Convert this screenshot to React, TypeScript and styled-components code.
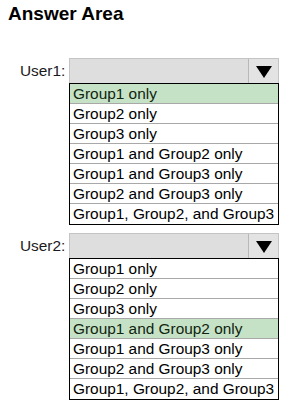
import React from 'react';
import styled, { createGlobalStyle } from 'styled-components';

const GlobalStyle = createGlobalStyle`
  body {
    margin: 0;
    background: #ffffff;
    font-family: 'Liberation Sans', Arial, sans-serif;
    color: #000000;
  }
`;

const OPTIONS = [
  'Group1 only',
  'Group2 only',
  'Group3 only',
  'Group1 and Group2 only',
  'Group1 and Group3 only',
  'Group2 and Group3 only',
  'Group1, Group2, and Group3',
];

interface UserChoice {
  label: string;
  selected: number;
}

const CHOICES: UserChoice[] = [
  { label: 'User1:', selected: 0 },
  { label: 'User2:', selected: 3 },
];

export default function App() {
  return (
    <Root>
      <GlobalStyle />
      <Title>Answer Area</Title>
      <Choices>
        {CHOICES.map((choice) => (
          <ChoiceRow key={choice.label}>
            <Label>{choice.label}</Label>
            <Dropdown>
              <SelectBox>
                <SelectValue />
                <ArrowButton>
                  <svg width="16" height="12" viewBox="0 0 16 12">
                    <polygon points="0,0 16,0 8,12" fill="#000" />
                  </svg>
                </ArrowButton>
              </SelectBox>
              <OptionList>
                {OPTIONS.map((option, i) => (
                  <OptionItem key={option} selected={i === choice.selected}>
                    {option}
                  </OptionItem>
                ))}
              </OptionList>
            </Dropdown>
          </ChoiceRow>
        ))}
      </Choices>
    </Root>
  );
}

const Root = styled.main`
  width: 287px;
  height: 408px;
  padding-top: 3px;
  box-sizing: border-box;
`;

const Title = styled.h1`
  margin: 0 0 0 8px;
  font-size: 19px;
  line-height: 22px;
  font-weight: 700;
`;

const Choices = styled.section`
  display: flex;
  flex-direction: column;
  gap: 8px;
  margin-top: 33px;
`;

const ChoiceRow = styled.div`
  display: flex;
  align-items: flex-start;
  padding-left: 20px;
`;

const Label = styled.span`
  width: 49px;
  height: 25px;
  display: flex;
  align-items: center;
  font-size: 15.4px;
  color: #1a1a1a;
`;

const Dropdown = styled.div`
  width: 210px;
  display: flex;
  flex-direction: column;
`;

const SelectBox = styled.div`
  height: 25px;
  display: flex;
  box-sizing: border-box;
  border: 1px solid #c4c4c4;
  border-bottom: none;
  background: #dedede;
`;

const SelectValue = styled.div`
  flex: 1;
`;

const ArrowButton = styled.div`
  width: 30px;
  display: flex;
  align-items: center;
  justify-content: center;
  border-left: 1px solid #b8b8b8;
  background: #e3e3e3;
  padding-top: 2px;
  box-sizing: border-box;
`;

const OptionList = styled.ul`
  list-style: none;
  margin: 0;
  padding: 0;
  border: 1px solid #000000;
  background: #ffffff;
`;

const OptionItem = styled.li<{ selected: boolean }>`
  height: 20px;
  box-sizing: border-box;
  padding-left: 3px;
  font-size: 15.4px;
  line-height: 19px;
  white-space: nowrap;
  border-bottom: 1px solid #a8a8a8;
  background: ${({ selected }) => (selected ? '#c6e2c6' : '#ffffff')};
  color: ${({ selected }) => (selected ? '#10240f' : '#000000')};

  &:last-child {
    border-bottom: none;
  }
`;
